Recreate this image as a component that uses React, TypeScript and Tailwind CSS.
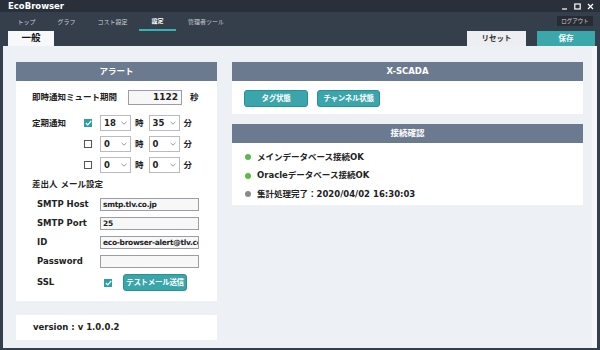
const font = "font-['DejaVu_Sans','Noto_Sans_CJK_JP',sans-serif]";

function Chevron() {
  return (
    <svg width="6" height="4" viewBox="0 0 6 4" className="shrink-0">
      <path d="M0.5 0.8 L3 3.2 L5.5 0.8" fill="none" stroke="#8a8f96" strokeWidth="0.9" />
    </svg>
  );
}

function Check({ checked }: { checked: boolean }) {
  if (!checked) {
    return <div className="h-[8px] w-[8px] shrink-0 border border-[#555] bg-white" />;
  }
  return (
    <div className="flex h-[8px] w-[8px] shrink-0 items-center justify-center bg-[#2e9ea5]">
      <svg width="7" height="6" viewBox="0 0 7 6">
        <path d="M0.8 3 L2.7 4.8 L6.2 1" fill="none" stroke="#fff" strokeWidth="1.2" />
      </svg>
    </div>
  );
}

function Select({ value }: { value: string }) {
  return (
    <div className="flex h-[16px] w-[31px] items-center justify-between border border-[#b8bcc2] bg-white pl-[3px] pr-[3px] text-[8.5px] font-bold text-[#222]">
      <span>{value}</span>
      <Chevron />
    </div>
  );
}

function TimeRow({ checked, h, m }: { checked: boolean; h: string; m: string }) {
  return (
    <div className="flex h-[16px] items-center">
      <Check checked={checked} />
      <div className="ml-[8px]">
        <Select value={h} />
      </div>
      <span className="ml-[4px] mr-[5px] text-[8.5px] font-bold">時</span>
      <Select value={m} />
      <span className="ml-[4px] text-[8.5px] font-bold">分</span>
    </div>
  );
}

function Field({ label, value }: { label: string; value: string }) {
  return (
    <div className="flex h-[13px] items-center">
      <span className="w-[68px] pl-[5px] text-[8.5px] font-bold text-[#222]">{label}</span>
      <div className="flex h-[13px] w-[99px] items-center overflow-hidden whitespace-nowrap border border-[#9a9ea4] bg-[#f7f7f7] pl-[2px] text-[7.5px] font-bold tracking-[-0.3px] text-[#222]">
        {value}
      </div>
    </div>
  );
}

function PanelHeader({ title }: { title: string }) {
  return (
    <div className="flex h-[19px] items-center justify-center bg-[#6c7a8f] text-[8.5px] font-bold text-white">
      {title}
    </div>
  );
}

function TealButton({ label, w }: { label: string; w: string }) {
  return (
    <div
      className={`flex h-[17px] ${w} items-center justify-center whitespace-nowrap rounded-[3px] border border-[#2c8f94] bg-[#3aa5aa] text-[7.5px] font-bold tracking-[-0.3px] text-white`}
    >
      {label}
    </div>
  );
}

function StatusRow({ color, text }: { color: string; text: string }) {
  return (
    <div className="flex h-[10px] items-center">
      <div className={`h-[6px] w-[6px] rounded-full ${color}`} />
      <span className="ml-[6px] text-[8.5px] font-bold text-[#222]">{text}</span>
    </div>
  );
}

const tabs = [
  { label: 'トップ', w: 'w-[37px]' },
  { label: 'グラフ', w: 'w-[43px]' },
  { label: 'コスト設定', w: 'w-[49px] mr-[2px]' },
  { label: '設定', w: 'w-[37px]' },
  { label: '管理者ツール', w: 'w-[60px]' },
];

export default function App() {
  return (
    <div className={`flex h-[350px] w-[600px] flex-col overflow-hidden bg-[#353e4b] ${font}`}>
      {/* title bar */}
      <div className="flex h-[12px] items-center justify-between bg-[#2a3039] pl-[8px] pr-[6px]">
        <span className="text-[8.5px] font-bold leading-none text-white">EcoBrowser</span>
        <div className="flex items-center gap-[6px]">
          <svg width="7" height="7" viewBox="0 0 7 7">
            <path d="M1 6 H6" stroke="#fff" strokeWidth="1.2" />
          </svg>
          <svg width="7" height="7" viewBox="0 0 7 7">
            <rect x="0.8" y="1" width="5.4" height="5" fill="none" stroke="#fff" strokeWidth="1.2" />
          </svg>
          <svg width="7" height="7" viewBox="0 0 7 7">
            <path d="M1 1 L6 6 M6 1 L1 6" stroke="#fff" strokeWidth="1.2" />
          </svg>
        </div>
      </div>

      {/* nav */}
      <div className="flex h-[19px] items-start justify-between pl-[8px] pr-[7px]">
        <div className="flex">
          {tabs.map((t) => (
            <div
              key={t.label}
              className={`flex h-[19px] ${t.w} items-center justify-center whitespace-nowrap text-[6px] ${
                t.label === '設定' ? 'border-b-2 border-[#35b3b3] font-bold text-white' : 'text-[#c9ced6]'
              }`}
            >
              {t.label}
            </div>
          ))}
        </div>
        <div className="mt-[4px] flex h-[10px] w-[36px] items-center justify-center bg-[#272c34] text-[5.5px] text-[#c9ced6]">
          ログアウト
        </div>
      </div>
      <div className="flex h-[15px] items-end justify-between pl-[8px] pr-[5px]">
        <div className="flex h-[15px] w-[46px] items-center justify-center bg-[#f7f8fa] text-[9.5px] font-bold text-[#111]">
          一般
        </div>
        <div className="flex gap-[11px]">
          <div className="flex h-[15px] w-[59px] items-center justify-center bg-[#eceef1] text-[7.5px] font-bold text-[#333]">
            リセット
          </div>
          <div className="flex h-[15px] w-[58px] items-center justify-center bg-[#3aa8aa] text-[7.5px] font-bold text-white">
            保存
          </div>
        </div>
      </div>

      {/* content */}
      <div className="flex flex-1 pb-[2px] pl-[3px] pr-[3px]">
        <div className="flex flex-1 bg-[#edf1f5]">
          <div className="flex flex-1 gap-[15px] pl-[13px] pt-[16px]">
            {/* left column */}
            <div className="flex w-[201px] flex-col gap-[14px]">
              <div className="bg-white">
                <PanelHeader title="アラート" />
                <div className="flex flex-col pb-[10px] pl-[16px] pt-[9px] text-[#222]">
                  <div className="flex h-[15px] items-center">
                    <span className="w-[96px] text-[8.5px] font-bold">即時通知ミュート期間</span>
                    <div className="flex h-[15px] w-[54px] items-center justify-end border border-[#9a9ea4] bg-[#f7f7f7] pr-[3px] text-[9px] font-bold">
                      1122
                    </div>
                    <span className="ml-[8px] text-[8.5px] font-bold">秒</span>
                  </div>
                  <div className="mt-[10px] flex">
                    <span className="w-[52px] pt-[2px] text-[8.5px] font-bold leading-[12px]">定期通知</span>
                    <div className="flex flex-col gap-[5px]">
                      <TimeRow checked h="18" m="35" />
                      <TimeRow checked={false} h="0" m="0" />
                      <TimeRow checked={false} h="0" m="0" />
                    </div>
                  </div>
                  <div className="mt-[5px] text-[8.5px] font-bold leading-[12px]">差出人 メール設定</div>
                  <div className="mt-[8px] flex flex-col gap-[6px]">
                    <Field label="SMTP Host" value="smtp.tlv.co.jp" />
                    <Field label="SMTP Port" value="25" />
                    <Field label="ID" value="eco-browser-alert@tlv.co.jp" />
                    <Field label="Password" value="" />
                  </div>
                  <div className="mt-[6px] flex h-[17px] items-center">
                    <span className="w-[72px] pl-[5px] text-[8.5px] font-bold">SSL</span>
                    <Check checked />
                    <div className="ml-[11px]">
                      <TealButton label="テストメール送信" w="w-[64px]" />
                    </div>
                  </div>
                </div>
              </div>
              <div className="flex h-[25px] items-center bg-white pl-[17px] text-[8.5px] font-bold text-[#222]">
                version : v 1.0.0.2
              </div>
            </div>

            {/* right column */}
            <div className="flex w-[351px] flex-col gap-[10px]">
              <div className="bg-white">
                <PanelHeader title="X-SCADA" />
                <div className="flex gap-[9px] pb-[7px] pl-[12px] pt-[9px]">
                  <TealButton label="タグ状態" w="w-[64px]" />
                  <TealButton label="チャンネル状態" w="w-[63px]" />
                </div>
              </div>
              <div className="bg-white">
                <PanelHeader title="接続確認" />
                <div className="flex h-[62px] flex-col gap-[8.5px] pl-[13px] pt-[9px]">
                  <StatusRow color="bg-[#5cb947]" text="メインデータベース接続OK" />
                  <StatusRow color="bg-[#5cb947]" text="Oracleデータベース接続OK" />
                  <StatusRow color="bg-[#8a8a8a]" text="集計処理完了：2020/04/02 16:30:03" />
                </div>
              </div>
            </div>
          </div>
          <div className="w-[5px] bg-[#f4f6f9]" />
        </div>
      </div>
    </div>
  );
}
